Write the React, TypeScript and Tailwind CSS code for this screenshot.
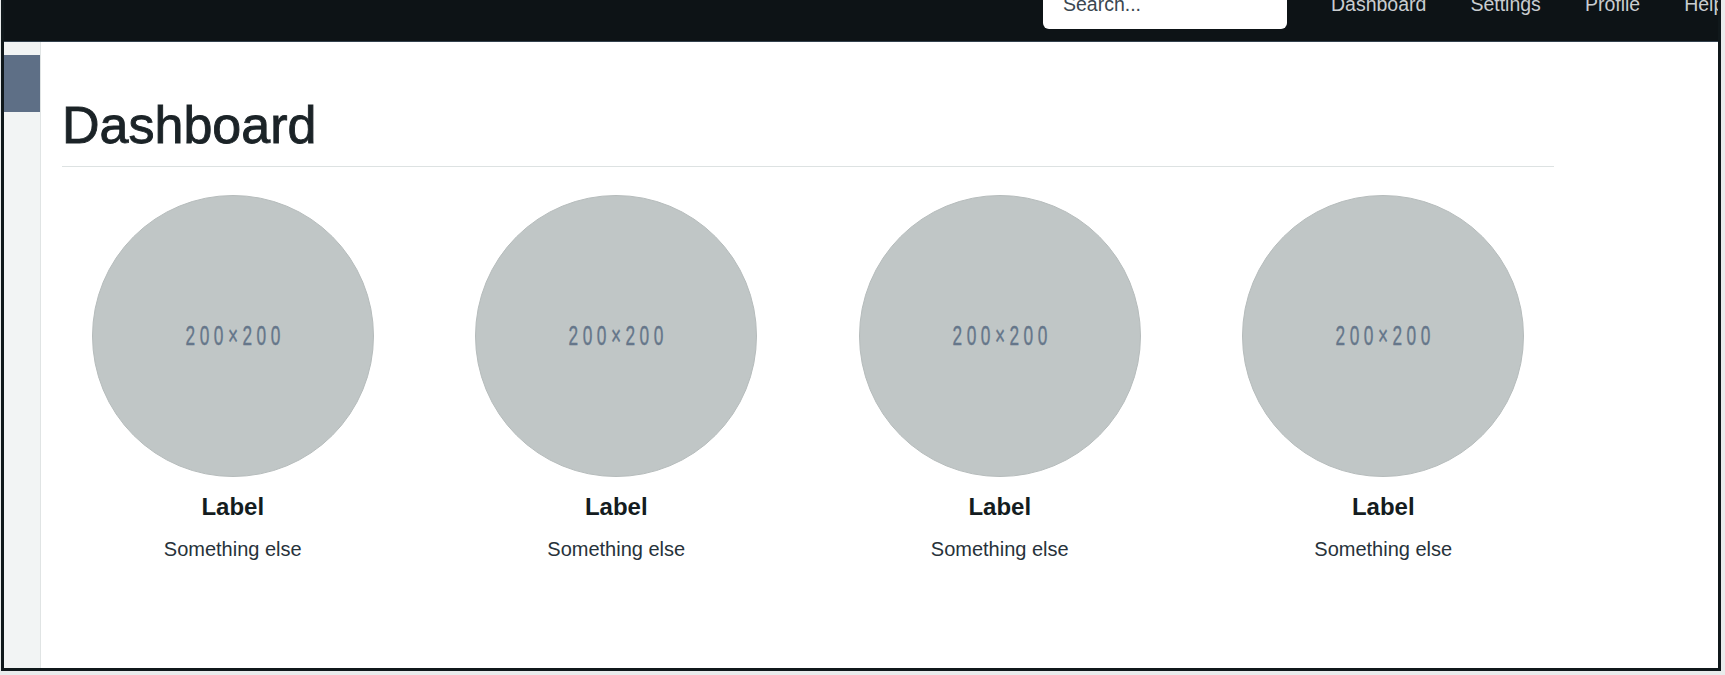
import React from "react";

const items = [0, 1, 2, 3];

export default function App() {
  return (
    <div className="w-[1725px] h-[675px] bg-[#e9ecec] pl-px pr-[4px] pb-[4px] font-['Liberation_Sans',Arial,sans-serif]">
      <div className="h-full flex flex-col border-x-[3px] border-b-[3px] border-[#10181b] bg-white overflow-hidden">
        <nav className="h-[42px] shrink-0 bg-[#0d1316] border-b border-[#33414d] flex items-start overflow-hidden">
          <div className="ml-[1039px] w-[244px] h-[29px] shrink-0 bg-white rounded-b-[6px] pl-[20px] overflow-hidden">
            <div className="-mt-[6px] leading-[20px] text-[19.5px] text-[#3a4650] whitespace-nowrap">
              Search...
            </div>
          </div>
          <div className="ml-[44px] -mt-[6px] flex gap-[44px] shrink-0 leading-[20px] text-[19.5px] text-[#c9cdd0] whitespace-nowrap">
            <span>Dashboard</span>
            <span>Settings</span>
            <span>Profile</span>
            <span>Help</span>
          </div>
        </nav>
        <div className="flex flex-1">
          <aside className="w-[37px] shrink-0 bg-[#f2f4f4] border-r border-[#e0e4e4] pt-[13px]">
            <div className="h-[57px] bg-[#5e6f86]" />
          </aside>
          <main className="pl-[21px] pt-[57px]">
            <div className="w-[1492px]">
              <h1 className="text-[52px] leading-[52px] font-normal text-[#1b2327] [-webkit-text-stroke:0.9px_#1b2327] pb-[15px] border-b border-[#dde2e2]">
                Dashboard
              </h1>
              <div className="-mx-[21px] mt-[28px] grid grid-cols-4">
                {items.map((i) => (
                  <div key={i} className="flex flex-col items-center">
                    <div className="w-[282px] h-[282px] rounded-full bg-[#c0c6c6] border border-[#b6bcbc] flex items-center justify-center">
                      <span className="inline-block scale-x-[0.64] text-[27px] leading-[27px] tracking-[7px] text-[#65768a] [-webkit-text-stroke:0.4px_#65768a] pl-[7px]">
                        200×200
                      </span>
                    </div>
                    <div className="mt-[18px] text-[24px] leading-[24px] font-bold text-[#141c20]">
                      Label
                    </div>
                    <div className="mt-[20px] text-[20px] leading-[20px] text-[#27323a]">
                      Something else
                    </div>
                  </div>
                ))}
              </div>
            </div>
          </main>
        </div>
      </div>
    </div>
  );
}
